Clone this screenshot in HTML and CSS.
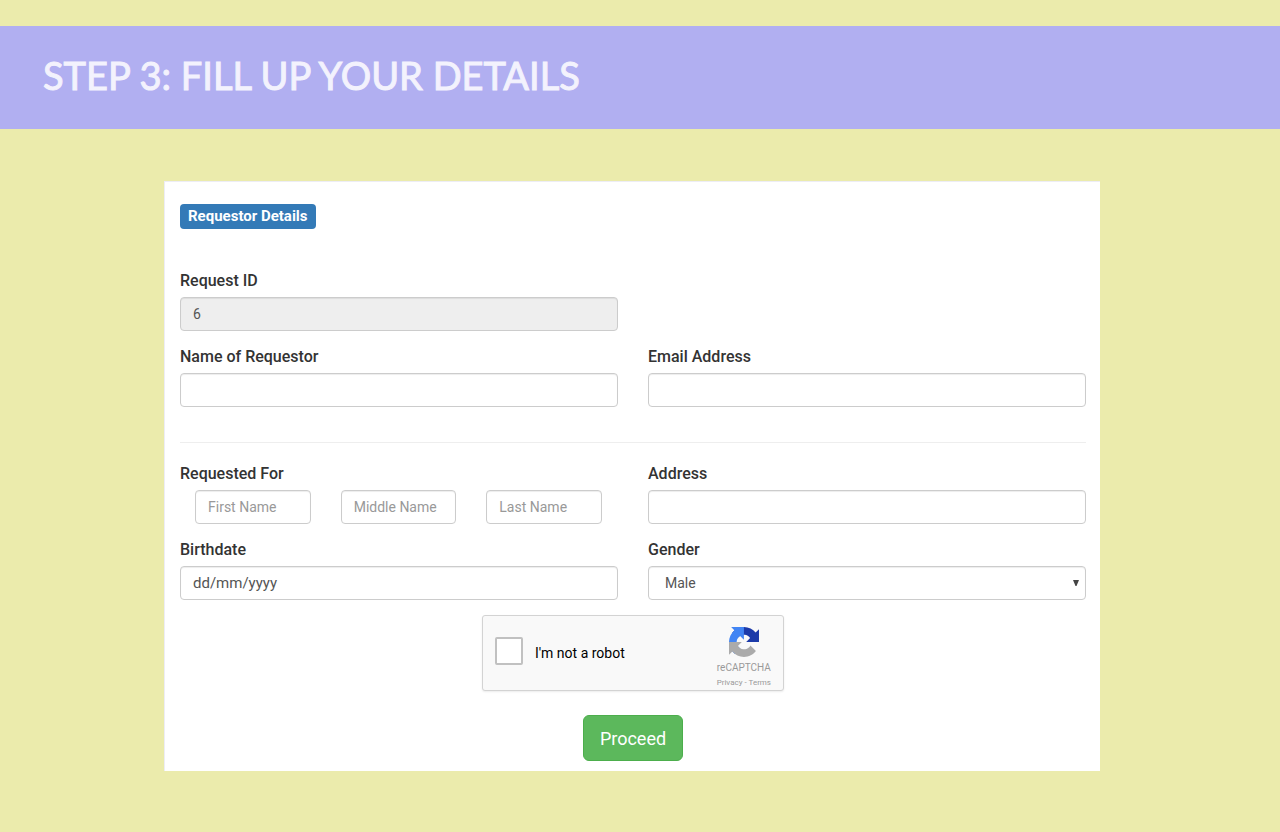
FILE: index.html
```html
<!DOCTYPE html>
<html lang="en">
<head>
<meta charset="utf-8">
<title>Fill Up Your Details</title>
<link rel="stylesheet" href="styles.css">
</head>
<body>
<header class="banner"><h1 class="banner-title">Step 3: Fill Up Your Details</h1></header>
<main class="page">
<form class="panel">
  <h2 class="badge">Requestor Details</h2>
  <div class="grid">
    <div class="field">
      <label class="label" for="request-id">Request ID</label>
      <input class="control" id="request-id" type="text" value="6" readonly>
    </div>
    <div class="field field-start">
      <label class="label" for="requestor">Name of Requestor</label>
      <input class="control" id="requestor" type="text">
    </div>
    <div class="field">
      <label class="label" for="email">Email Address</label>
      <input class="control" id="email" type="email">
    </div>
  </div>
  <hr class="rule">
  <div class="grid">
    <div class="field">
      <label class="label" for="first-name">Requested For</label>
      <div class="names">
        <input class="control" id="first-name" type="text" placeholder="First Name">
        <input class="control" type="text" placeholder="Middle Name" aria-label="Middle Name">
        <input class="control" type="text" placeholder="Last Name" aria-label="Last Name">
      </div>
    </div>
    <div class="field">
      <label class="label" for="address">Address</label>
      <input class="control" id="address" type="text">
    </div>
    <div class="field">
      <label class="label" for="birthdate">Birthdate</label>
      <input class="control date" id="birthdate" type="text" placeholder="dd/mm/yyyy">
    </div>
    <div class="field">
      <label class="label" for="gender">Gender</label>
      <div class="select-wrap">
        <select class="control select" id="gender"><option>Male</option><option>Female</option></select>
        <svg class="arrow" viewBox="0 0 6 6" aria-hidden="true"><path d="M0 0h6L3.5 6h-1z" fill="#444"/></svg>
      </div>
    </div>
  </div>
  <div class="captcha">
    <input class="captcha-box" id="robot" type="checkbox">
    <label class="captcha-label" for="robot">I'm not a robot</label>
    <div class="captcha-brand">
      <svg class="captcha-logo" viewBox="0 0 64 64" aria-hidden="true">
        <path fill="#1c3aa9" d="M64 31.955l-.033-1.37V4.687l-7.16 7.16C50.948 4.674 42.033.093 32.05.093c-10.4 0-19.622 4.96-25.458 12.64l11.736 11.86a15.55 15.55 0 0 1 4.754-5.334c2.05-1.6 4.952-2.906 8.968-2.906.485 0 .86.057 1.135.163 4.976.393 9.288 3.14 11.828 7.124l-8.307 8.307L64 31.953"/>
        <path fill="#4285f4" d="M31.862.094l-1.37.033H4.594l7.16 7.16C4.58 13.147 0 22.06 0 32.046c0 10.4 4.96 19.622 12.64 25.458L24.5 45.768a15.55 15.55 0 0 1-5.334-4.754c-1.6-2.05-2.906-4.952-2.906-8.968 0-.485.057-.86.163-1.135.393-4.976 3.14-9.288 7.124-11.828l8.307 8.307L31.86.095"/>
        <path fill="#ababab" d="M.001 32.045l.033 1.37v25.898l7.16-7.16c5.86 7.173 14.774 11.754 24.76 11.754 10.4 0 19.622-4.96 25.458-12.64l-11.736-11.86a15.55 15.55 0 0 1-4.754 5.334c-2.05 1.6-4.952 2.906-8.968 2.906-.485 0-.86-.057-1.135-.163-4.976-.393-9.288-3.14-11.828-7.124l8.307-8.307c-10.522.04-22.4.066-27.295-.005"/>
      </svg>
      <span class="captcha-name">reCAPTCHA</span>
      <span class="captcha-links"><a href="#privacy">Privacy</a> - <a href="#terms">Terms</a></span>
    </div>
  </div>
  <button class="proceed" type="submit">Proceed</button>
</form>
</main>
</body>
</html>
```
FILE: styles.css
```css
* { box-sizing: border-box; }
body {
  margin: 0;
  padding-top: 26px;
  background: #ebebac;
  color: #333;
  font-family: Roboto, "Liberation Sans", sans-serif;
  font-size: 14px;
}
.banner {
  padding: 24px 43px 29px;
  background: #b1aff1;
}
.banner-title {
  margin: 0;
  color: #f3f2fd;
  font-family: Lato, sans-serif;
  font-size: 38px;
  line-height: 50px;
  font-weight: 400;
  text-transform: uppercase;
  -webkit-text-stroke: 1px #f3f2fd;
}
.page { padding: 52px 32px 60px 16px; }
.panel {
  display: flex;
  flex-direction: column;
  max-width: 936px;
  margin: 0 auto;
  padding: 22px 14px 10px 15px;
  background: #fff;
  border: solid #ededf5;
  border-width: 1px 0 0 1px;
}
.badge {
  align-self: flex-start;
  margin: 0 0 41px;
  padding: 0 8px;
  border-radius: 4px;
  background: #337ab7;
  color: #fff;
  font-size: 15px;
  line-height: 25px;
  font-weight: 700;
}
.grid {
  display: grid;
  grid-template-columns: 1fr 1fr;
  gap: 15px 30px;
}
.field { min-width: 0; }
.field-start { grid-column: 1; }
.label {
  display: block;
  margin-bottom: 5px;
  font-size: 16px;
  line-height: 22px;
  font-weight: 500;
}
.control {
  display: block;
  width: 100%;
  min-width: 0;
  height: 34px;
  padding: 6px 12px;
  border: 1px solid #ccc;
  border-radius: 4px;
  background: #fff;
  box-shadow: inset 0 1px 1px rgba(0, 0, 0, .075);
  color: #555;
  font: inherit;
}
.control::placeholder { color: #999; opacity: 1; }
.control:read-only:not(select) { background: #eee; }
.date { font-size: 15px; }
.date::placeholder { color: #555; }
.names {
  display: grid;
  grid-template-columns: repeat(3, 1fr);
  gap: 30px;
  padding: 0 16px 0 15px;
}
.select-wrap { position: relative; }
.select { appearance: none; padding-left: 16px; }
.arrow {
  position: absolute;
  top: 14px;
  right: 7px;
  width: 6px;
  height: 6px;
  pointer-events: none;
}
.rule {
  width: 100%;
  margin: 35px 0 20px;
  border: 0;
  border-top: 1px solid #eee;
}
.captcha {
  display: flex;
  align-items: center;
  align-self: center;
  width: 302px;
  height: 76px;
  margin: 15px 0 24px;
  padding: 0 12px;
  border: 1px solid #d3d3d3;
  border-radius: 3px;
  background: #f9f9f9;
  box-shadow: 0 1px 2px rgba(0, 0, 0, .08);
  color: #000;
}
.captcha-box {
  appearance: none;
  width: 28px;
  height: 28px;
  margin: 0 12px 4px 0;
  border: 2px solid #c1c1c1;
  border-radius: 2px;
  background: #fff;
}
.captcha-label { flex: 1; }
.captcha-brand {
  display: flex;
  flex-direction: column;
  align-items: center;
  padding-top: 10px;
  color: #999;
}
.captcha-logo { width: 30px; height: 30px; margin-bottom: 3px; }
.captcha-name { font-size: 10px; line-height: 15px; }
.captcha-links { font-size: 8px; line-height: 15px; }
.captcha-links a { color: inherit; text-decoration: none; }
.proceed {
  align-self: center;
  height: 46px;
  padding: 0 16px;
  border: 1px solid #4cae4c;
  border-radius: 6px;
  background: #5cb85c;
  color: #fff;
  font: inherit;
  font-size: 18px;
}
```
